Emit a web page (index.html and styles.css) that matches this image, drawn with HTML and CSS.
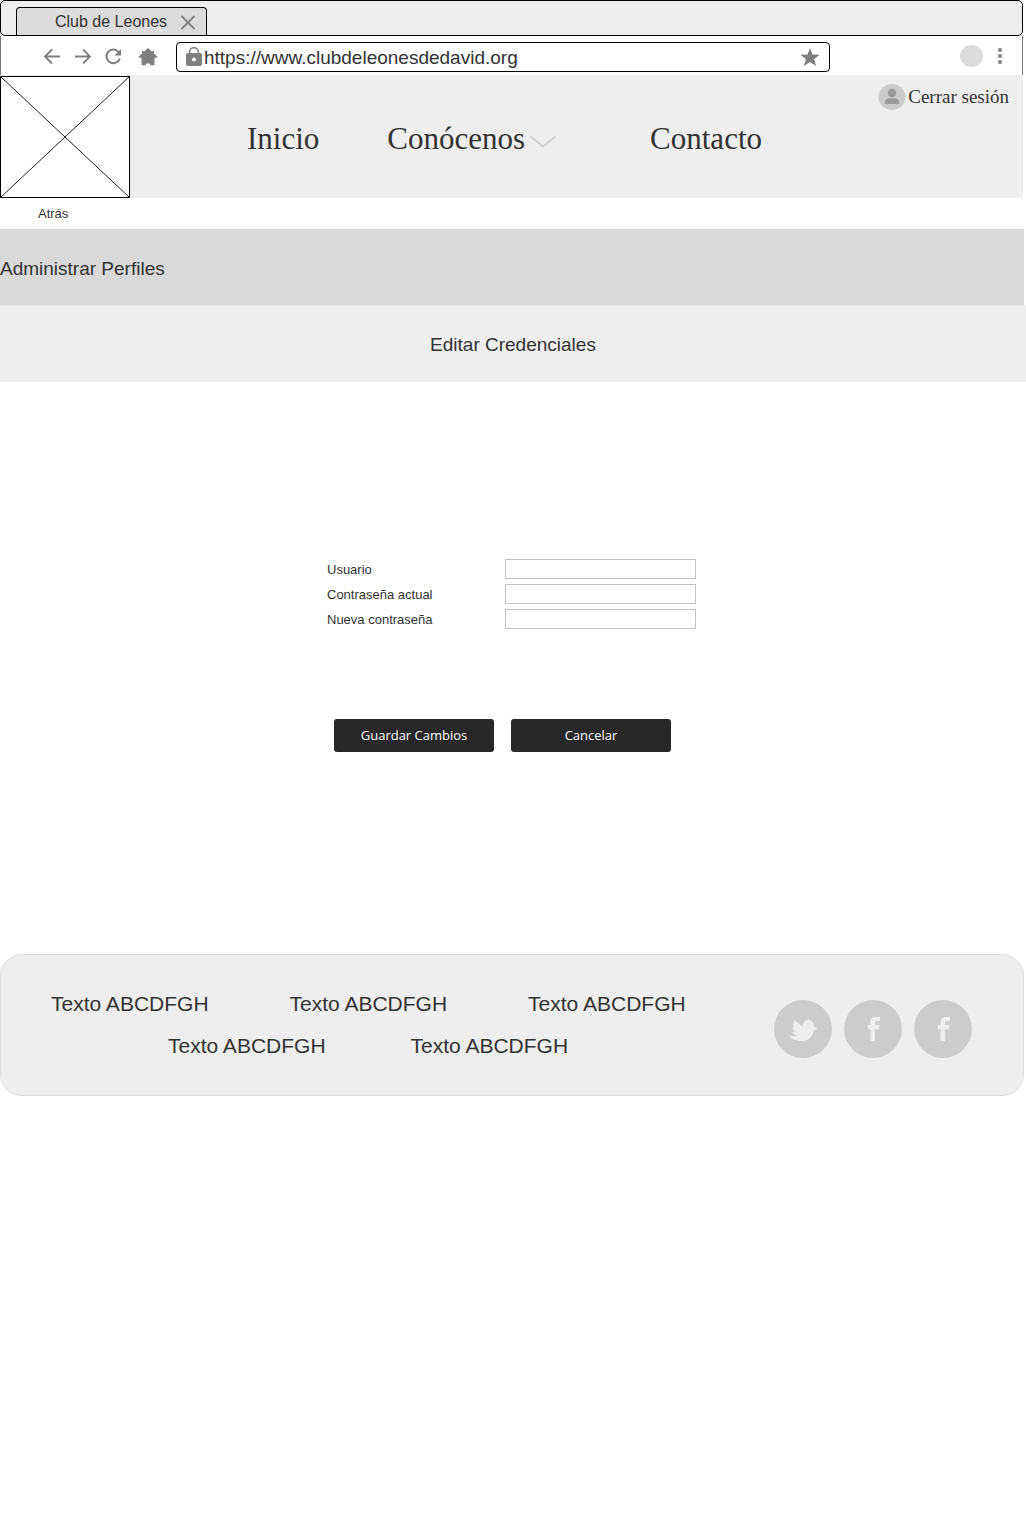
FILE: index.html
```html
<!DOCTYPE html>
<html lang="es">
<head>
<meta charset="utf-8">
<meta name="viewport" content="width=device-width, initial-scale=1">
<title>Club de Leones</title>
<link rel="stylesheet" href="styles.css">
</head>
<body>
<div class="browser">
  <div class="tab-strip">
    <div class="tab">
      <span>Club de Leones</span>
      <button class="icon-button" type="button" aria-label="Cerrar pestaña">
        <svg width="16" height="16" viewBox="0 0 16 16"><path d="M1.500 2l13 13M14.500 2l-13 13" fill="none" stroke="#7f7f7f" stroke-width="1.800"/></svg>
      </button>
    </div>
  </div>
  <div class="toolbar">
    <div class="toolbar-nav">
      <button class="icon-button" type="button" aria-label="Página anterior">
        <svg width="18" height="18" viewBox="0 0 18 18"><path d="M17 8.500H2.500M9 1.500L2 8.500 9 15.500" fill="none" stroke="#7f7f7f" stroke-width="1.800"/></svg>
      </button>
      <button class="icon-button" type="button" aria-label="Página siguiente">
        <svg width="18" height="18" viewBox="0 0 18 18"><path d="M1 8.500h14.500M9 1.500L16 8.500 9 15.500" fill="none" stroke="#7f7f7f" stroke-width="1.800"/></svg>
      </button>
      <button class="icon-button" type="button" aria-label="Recargar">
        <svg width="18" height="18" viewBox="0 0 18 18"><path d="M13.400 3.800A6.800 6.800 0 1 0 14.800 10.500" fill="none" stroke="#7f7f7f" stroke-width="2"/><path d="M16 1v6.500H9.500z" fill="#7f7f7f"/></svg>
      </button>
      <button class="icon-button home" type="button" aria-label="Inicio">
        <svg width="20" height="18" viewBox="0 0 20 18"><path d="M10 0L13.500 3.200L16 3V5.500L20 9.200L16.500 10V17.200H12.500L11.500 15.500H8.500L7.500 17.200H3.500V10L0 9.200L4 5.500V3L6.500 3.200Z" fill="#7f7f7f"/></svg>
      </button>
    </div>
    <div class="address">
      <svg width="16" height="20" viewBox="0 0 16 20"><path d="M3.500 8V5.200a4.500 4.500 0 0 1 9 0V8" fill="none" stroke="#7f7f7f" stroke-width="1.600"/><path fill-rule="evenodd" d="M2 6h12a2 2 0 0 1 2 2v9a2 2 0 0 1-2 2H2a2 2 0 0 1-2-2V8a2 2 0 0 1 2-2zm6 4.500a2 2 0 1 0 0 4 2 2 0 0 0 0-4z" fill="#7f7f7f"/></svg>
      <input class="url" type="text" aria-label="Dirección" value="https://www.clubdeleonesdedavid.org">
      <button class="icon-button" type="button" aria-label="Añadir a favoritos">
        <svg width="20" height="18" viewBox="0 0 20 18"><path d="M10 0l2.500 6.500 7.300.3-5.700 4.300 2 6.900-6.100-4-6.100 4 2-6.900L.2 6.800l7.300-.3z" fill="#7f7f7f"/></svg>
      </button>
    </div>
    <div class="toolbar-end">
      <span class="avatar"></span>
      <button class="icon-button" type="button" aria-label="Menú">
        <svg width="4" height="16" viewBox="0 0 4 16"><g fill="#7f7f7f"><circle cx="2" cy="2" r="2"/><circle cx="2" cy="8" r="2"/><circle cx="2" cy="14" r="2"/></g></svg>
      </button>
    </div>
  </div>
</div>

<header class="site-header">
  <svg class="logo" width="130" height="122" viewBox="0 0 130 122" role="img" aria-label="Logotipo"><path d="M.5.500h129v121H.5z" fill="#fff" stroke="#000"/><path d="M.5.500l129 121M129.500.500L.5 121.500" stroke="#222"/></svg>
  <nav class="site-nav">
    <a href="#">Inicio</a>
    <button class="menu" type="button">Conócenos
      <svg width="26" height="12" viewBox="0 0 26 12"><path d="M.5.500L13 10.500 25.500.500" fill="none" stroke="#ccc" stroke-width="1.500"/></svg>
    </button>
    <a class="contact" href="#">Contacto</a>
  </nav>
  <a class="session" href="#">
    <svg width="28" height="26" viewBox="0 0 28 26"><ellipse cx="14" cy="13" rx="13.500" ry="13" fill="#ccc"/><circle cx="14" cy="9" r="4.300" fill="#999"/><path d="M7 20v-2c0-2.500 2.500-3.800 4.500-3.800h5c2 0 4.500 1.300 4.500 3.800v2z" fill="#999"/></svg>
    Cerrar sesión
  </a>
</header>

<a class="back" href="#">Atrás</a>

<main>
  <h1 class="band">Administrar Perfiles</h1>
  <h2 class="band band-light">Editar Credenciales</h2>
  <form class="credentials">
    <div class="fields">
      <label for="user">Usuario</label><input id="user" type="text">
      <label for="current">Contraseña actual</label><input id="current" type="password">
      <label for="new">Nueva contraseña</label><input id="new" type="password">
    </div>
    <div class="actions">
      <button type="submit">Guardar Cambios</button>
      <button type="reset">Cancelar</button>
    </div>
  </form>
</main>

<footer class="site-footer">
  <div class="footer-links">
    <div class="row"><a href="#">Texto ABCDFGH</a><a href="#">Texto ABCDFGH</a><a href="#">Texto ABCDFGH</a></div>
    <div class="row row-inset"><a href="#">Texto ABCDFGH</a><a href="#">Texto ABCDFGH</a></div>
  </div>
  <div class="social">
    <a href="#" aria-label="Twitter"><svg width="58" height="58" viewBox="0 0 58 58"><path d="M19.700 20L28.500 26.300C28.500 24.500 29 22.800 30.300 21.700C31.600 20.500 33 20.300 35 19.300L36 20.300C37.500 20.500 38.300 21.200 38.700 22.500L40 26L43.500 29L40 30.300C39 36.500 34.500 41 27.700 41C21.500 41 17.500 38.800 15 35C17.500 36.300 20.500 36.800 23.200 35.800C20.500 35 19 34 18 32.300L21.300 31.300C19.800 30.500 18.800 29.300 18.300 27.700L20.300 27.600C19.200 26.300 18.600 24.800 18.600 23.200L20.300 23.700Z" fill="#eee"/></svg></a>
    <a href="#" aria-label="Facebook"><svg width="58" height="58" viewBox="0 0 58 58"><path d="M26.500 41V29.500H24V25H26.500V22.500C26.500 18.700 28.700 17 32 17H36V21H33.500C31.700 21 31 21.700 31 23V25H35.500L35 29.500H31V41Z" fill="#eee"/></svg></a>
    <a href="#" aria-label="Facebook"><svg width="58" height="58" viewBox="0 0 58 58"><path d="M26.500 41V29.500H24V25H26.500V22.500C26.500 18.700 28.700 17 32 17H36V21H33.500C31.700 21 31 21.700 31 23V25H35.500L35 29.500H31V41Z" fill="#eee"/></svg></a>
  </div>
</footer>
</body>
</html>
```
FILE: styles.css
```css
* { box-sizing: border-box; }

body {
  margin: 0;
  background: #fff;
  color: #333;
  font-family: "Liberation Sans", Arial, sans-serif;
  font-size: 13px;
}

a { color: inherit; text-decoration: none; }
svg { display: block; flex: none; }

button {
  border: 0;
  padding: 0;
  background: none;
  color: inherit;
  font: inherit;
  cursor: pointer;
}

.icon-button { flex: none; }

/* Browser frame */
.browser { margin-right: 3px; }

.tab-strip {
  display: flex;
  align-items: flex-end;
  height: 36px;
  padding-left: 15px;
  border: 1px solid #000;
  border-radius: 5px;
  background: #eee;
}

.tab {
  display: flex;
  align-items: center;
  gap: 13px;
  height: 28px;
  padding: 1px 10px 0 38px;
  border: 1px solid #000;
  border-bottom: 0;
  border-radius: 4px 4px 0 0;
  background: #dcdcdc;
  font-size: 16px;
}

.toolbar {
  display: flex;
  align-items: center;
  height: 39px;
  padding-top: 3px;
  border: 1px solid #777;
  border-width: 0 1px;
}

.toolbar-nav {
  display: flex;
  align-items: center;
  gap: 13px;
  padding: 0 18px 0 42px;
}

.home { margin-left: 2px; }

.address {
  display: flex;
  flex: 1;
  align-items: center;
  height: 30px;
  padding: 0 9px;
  border: 1px solid #000;
  border-radius: 4px;
}

.url {
  flex: 1;
  min-width: 0;
  border: 0;
  padding: 1px 2px 0;
  background: none;
  color: inherit;
  font: inherit;
  font-size: 19px;
}

.toolbar-end {
  display: flex;
  align-items: center;
  gap: 15px;
  padding: 0 20px 3px 130px;
}

.avatar {
  width: 23px;
  height: 22px;
  border-radius: 50%;
  background: #dcdcdc;
}

/* Site header */
.site-header {
  display: flex;
  margin-right: 3px;
  padding-top: 1px;
  border-radius: 0 0 4px 0;
  background: #eee;
  font-family: "Liberation Serif", "Times New Roman", serif;
}

.site-nav {
  display: flex;
  flex: 1;
  align-items: center;
  gap: 68px;
  padding: 4px 0 0 117px;
  font-size: 31px;
}

.menu {
  display: flex;
  align-items: center;
  gap: 5px;
}

.menu svg { margin-top: 5px; }
.contact { margin-left: 26px; }

.session {
  display: flex;
  align-items: center;
  gap: 2px;
  align-self: flex-start;
  padding: 8px 14px 0 0;
  font-size: 19px;
}

.back {
  display: block;
  padding-left: 38px;
  line-height: 31px;
}

/* Title bands */
.band {
  margin: 0 2px 0 0;
  padding-top: 4px;
  background: #d9d9d9;
  font-size: 19px;
  font-weight: 400;
  line-height: 72px;
}

.band-light {
  margin: 0;
  padding-bottom: 1px;
  background: #eee;
  text-align: center;
}

/* Credentials form */
.credentials {
  display: grid;
  grid-template-columns: minmax(0, 369px);
  justify-content: center;
  gap: 90px;
  margin-right: 3px;
  padding: 177px 0 202px;
}

.fields {
  display: grid;
  grid-template-columns: 1fr 191px;
  gap: 5px 0;
  line-height: 21px;
}

.fields label { height: 20px; }

.fields input {
  width: 100%;
  height: 20px;
  border: 1px solid #c4c4c4;
  padding: 0 4px;
  font: inherit;
}

.actions {
  display: flex;
  gap: 17px;
  padding-left: 7px;
}

.actions button {
  width: 160px;
  height: 33px;
  padding-bottom: 1px;
  border-radius: 3px;
  background: #282828;
  color: #fff;
  font-family: "Open Sans", sans-serif;
}

/* Footer */
.site-footer {
  display: flex;
  justify-content: space-between;
  margin-right: 2px;
  padding: 37px 51px 37px 50px;
  border: 1px solid #ddd;
  border-radius: 22px;
  background: #eee;
}

.footer-links {
  display: grid;
  gap: 18px;
  font-size: 21px;
  line-height: 24px;
}

.row { display: flex; gap: 81px; }
.row-inset { padding-left: 117px; gap: 85px; }

.social {
  display: flex;
  align-items: flex-end;
  gap: 12px;
}

.social a {
  border-radius: 50%;
  background: #ccc;
}
```
